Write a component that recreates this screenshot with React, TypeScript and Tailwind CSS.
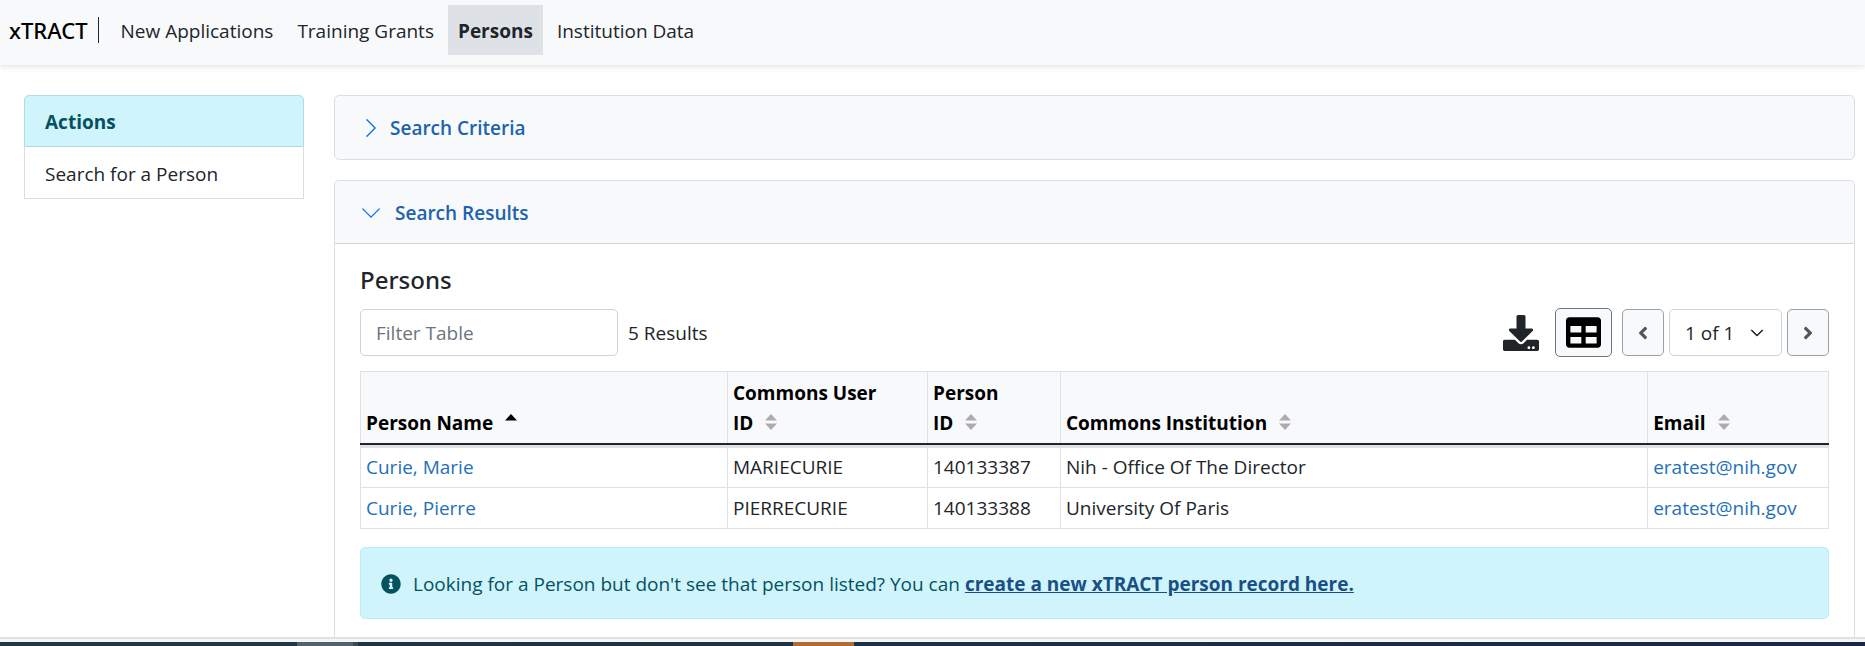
import React, { useState } from 'react';
import { BsChevronDown, BsChevronRight } from 'react-icons/bs';
import { FaAngleLeft, FaAngleRight, FaDownload, FaInfoCircle, FaTable } from 'react-icons/fa';

const navItems = ['New Applications', 'Training Grants', 'Persons', 'Institution Data'];

const columns = [
  { label: ['Person Name'], width: 'w-1/4', sorted: true },
  { label: ['Commons User', 'ID'], width: 'w-[200px]', sorted: false },
  { label: ['Person', 'ID'], width: 'w-[133px]', sorted: false },
  { label: ['Commons Institution'], width: 'w-2/5', sorted: false },
  { label: ['Email'], width: '', sorted: false },
];

const persons = [
  {
    name: 'Curie, Marie',
    userId: 'MARIECURIE',
    personId: '140133387',
    institution: 'Nih - Office Of The Director',
    email: 'eratest@nih.gov',
  },
  {
    name: 'Curie, Pierre',
    userId: 'PIERRECURIE',
    personId: '140133388',
    institution: 'University Of Paris',
    email: 'eratest@nih.gov',
  },
];

function SortIcon({ sorted }: { sorted: boolean }) {
  return (
    <svg viewBox="0 0 12 16" className="ml-3 inline-block h-4 w-3 align-baseline" aria-hidden="true">
      <path d="M6 0 L12 6.5 H0 Z" fill={sorted ? '#000000' : '#adadaf'} />
      {!sorted && <path d="M6 16 L12 9.5 H0 Z" fill="#adadaf" />}
    </svg>
  );
}

export default function App() {
  const [filter, setFilter] = useState('');

  return (
    <div className="flex min-h-screen flex-col bg-white font-['Open_Sans','Noto_Sans',sans-serif] text-[19px] leading-[30px] text-[#212529]">
      {/* Top navigation */}
      <nav className="flex h-[65px] items-start bg-[#f8f9fb] px-[9px] pt-[5px] shadow-[0_2px_5px_rgba(0,0,0,0.1)]">
        <div className="flex h-[50px] items-center">
          <span className="border-r border-[#212529] pr-[10px] font-['Noto_Sans',sans-serif] text-[22px] leading-[26px] font-medium text-black">
            xTRACT
          </span>
        </div>
        <ul className="ml-3 flex gap-1">
          {navItems.map((item) => (
            <li key={item}>
              <a
                href="#"
                className={`flex h-[50px] items-center px-[10px] pt-[2px] ${
                  item === 'Persons' ? 'bg-[#dee2e6] font-bold' : ''
                }`}
              >
                {item}
              </a>
            </li>
          ))}
        </ul>
      </nav>

      <div className="flex grow items-stretch gap-[30px] pt-[30px] pr-[10px] pl-6">
        {/* Actions */}
        <aside className="w-[280px] shrink-0">
          <h2 className="rounded-t-[5px] border border-[#b0dbe2] bg-[#cff4fc] px-5 pt-[11px] pb-[9px] font-bold text-[#055160]">
            Actions
          </h2>
          <a href="#" className="block border border-t-0 border-[#dcdde0] px-5 pt-3 pb-[9px]">
            Search for a Person
          </a>
        </aside>

        <main className="flex min-w-0 grow flex-col gap-5">
          <section className="rounded-[5px] border border-[#dcdee1] bg-[#f8f9fb]">
            <button type="button" className="flex h-[63px] w-full items-center gap-2 px-[25px] font-semibold text-[#2062ae]">
              <BsChevronRight className="h-[22px] w-[22px] text-[#0d6efd]" />
              Search Criteria
            </button>
          </section>

          <section className="grow rounded-t-[5px] border border-b-0 border-[#dcdee1]">
            <button
              type="button"
              className="flex h-[63px] w-full items-center gap-[13px] rounded-t-[5px] border-b border-[#d3d6da] bg-[#f8f9fb] px-[25px] pt-[2px] font-semibold text-[#2062ae]"
            >
              <BsChevronDown className="h-[22px] w-[22px] text-[#0d6efd]" />
              Search Results
            </button>

            <div className="px-[25px] pt-5 pb-[17px]">
              <h3 className="font-['Noto_Sans',sans-serif] text-2xl leading-[32px] font-medium">Persons</h3>

              <div className="mt-3 flex items-center">
                <input
                  type="text"
                  aria-label="Filter Table"
                  placeholder="Filter Table"
                  value={filter}
                  onChange={(e) => setFilter(e.target.value)}
                  className="h-[47px] w-[258px] rounded-[5px] border border-[#ced4da] px-[15px] outline-none placeholder:text-[#6c757d]"
                />
                <span className="ml-[10px]">5 Results</span>

                <div className="ml-auto flex items-center">
                  <button type="button" aria-label="Download" className="mr-4">
                    <FaDownload className="h-9 w-9" />
                  </button>
                  <button
                    type="button"
                    aria-label="Table columns"
                    className="mr-[10px] flex h-[49px] w-[57px] items-center justify-center rounded-[5px] border border-[#6c757d] bg-[#f8f9fb] text-black"
                  >
                    <FaTable className="h-[35px] w-[35px]" />
                  </button>
                  <button
                    type="button"
                    aria-label="Previous page"
                    className="flex h-[47px] w-[42px] items-center justify-center rounded-[5px] border border-[#9aa1a8] bg-[#f8f9fb] text-[#555555]"
                  >
                    <FaAngleLeft className="h-5 w-5" />
                  </button>
                  <div className="mx-[5px] grid items-center">
                    <select
                      aria-label="Page"
                      className="col-start-1 row-start-1 h-[47px] w-[113px] appearance-none rounded-[5px] border border-[#ced4da] bg-white pl-[15px]"
                    >
                      <option>1 of 1</option>
                    </select>
                    <BsChevronDown className="pointer-events-none col-start-1 row-start-1 mr-[18px] h-[14px] w-[14px] justify-self-end stroke-1" />
                  </div>
                  <button
                    type="button"
                    aria-label="Next page"
                    className="flex h-[47px] w-[42px] items-center justify-center rounded-[5px] border border-[#9aa1a8] bg-[#f8f9fb] text-[#555555]"
                  >
                    <FaAngleRight className="h-5 w-5" />
                  </button>
                </div>
              </div>

              <table className="mt-[14px] w-full table-fixed border-collapse text-left">
                <thead>
                  <tr className="bg-[#f8f9fb]">
                    {columns.map((col) => (
                      <th
                        key={col.label.join(' ')}
                        className={`border border-b-2 border-[#dee2e6] border-b-[#212529] px-[5px] pt-[6px] pb-[5px] align-bottom font-bold text-black ${col.width}`}
                      >
                        {col.label.map((line, i) => (
                          <span key={line} className="block whitespace-nowrap">
                            {line}
                            {i === col.label.length - 1 && <SortIcon sorted={col.sorted} />}
                          </span>
                        ))}
                      </th>
                    ))}
                  </tr>
                </thead>
                <tbody className="[&_td]:border [&_td]:border-[#dee2e6] [&_td]:px-[5px]">
                  {persons.map((p) => (
                    <tr
                      key={p.personId}
                      className="h-[41px] first:h-[43px] first:[&_td]:pt-[3px] first:[&_td]:shadow-[inset_0_3px_0_#dee2e6]"
                    >
                      <td>
                        <a href="#" className="text-[#2470b8]">{p.name}</a>
                      </td>
                      <td>{p.userId}</td>
                      <td>{p.personId}</td>
                      <td>{p.institution}</td>
                      <td>
                        <a href={`mailto:${p.email}`} className="text-[#2470b8]">{p.email}</a>
                      </td>
                    </tr>
                  ))}
                </tbody>
              </table>

              <div className="mt-[18px] flex items-center gap-3 rounded-[5px] border border-[#b6effb] bg-[#cff4fc] px-5 pt-[21px] pb-[19px] text-[#055160]">
                <FaInfoCircle className="h-5 w-5 shrink-0" />
                <p>
                  Looking for a Person but don't see that person listed? You can{' '}
                  <a href="#" className="font-bold text-[#1a4f86] underline">
                    create a new xTRACT person record here.
                  </a>
                </p>
              </div>
            </div>
          </section>
        </main>
      </div>

      {/* Window edge and taskbar strip */}
      <footer>
        <div className="h-[5px] border-t-2 border-[#e2e2e4] bg-[#f6f6f7]" />
        <div className="flex h-1 bg-linear-to-r from-[#213945] to-[#172844]">
          <div className="ml-[297px] w-14 bg-[#50646d]" />
          <div className="w-[5px] bg-[#3b4b53]" />
          <div className="ml-[435px] w-[61px] bg-[#b06c33]" />
        </div>
      </footer>
    </div>
  );
}
